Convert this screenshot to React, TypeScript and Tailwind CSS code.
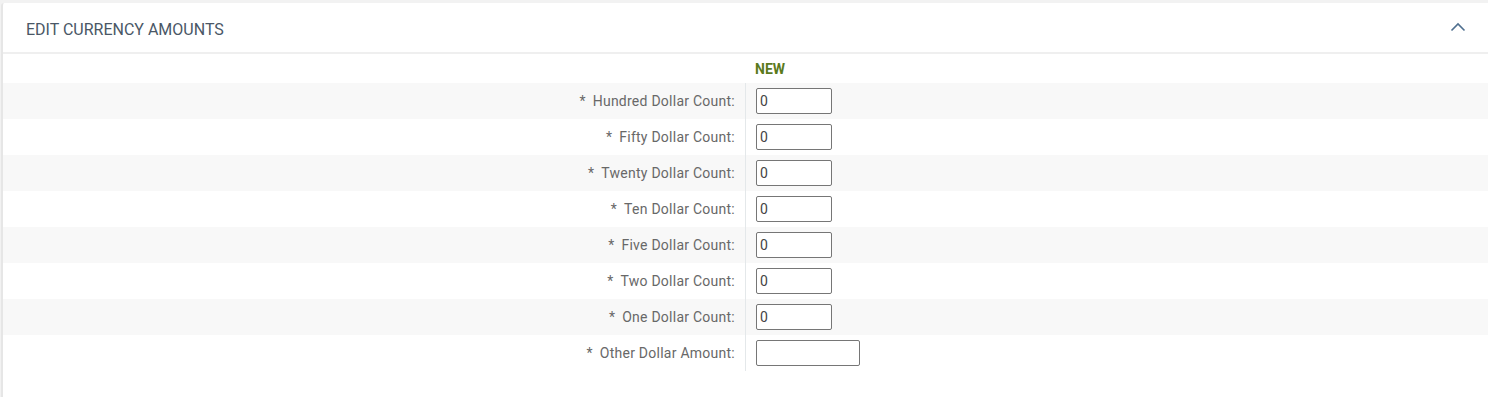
import React from 'react';

const rows = [
  { label: 'Hundred Dollar Count:', value: '0' },
  { label: 'Fifty Dollar Count:', value: '0' },
  { label: 'Twenty Dollar Count:', value: '0' },
  { label: 'Ten Dollar Count:', value: '0' },
  { label: 'Five Dollar Count:', value: '0' },
  { label: 'Two Dollar Count:', value: '0' },
  { label: 'One Dollar Count:', value: '0' },
  { label: 'Other Dollar Amount:', value: '', wide: true },
];

export default function App() {
  return (
    <div className="h-[397px] bg-[#f2f2f2] pt-[3px] pl-[1px] overflow-hidden" style={{ fontFamily: 'Roboto, "Liberation Sans", sans-serif' }}>
      <div className="h-full bg-white border-l-2 border-[#e6e6e6] rounded-tl-[3px]">
        {/* header */}
        <div className="h-[51px] flex items-center justify-between pl-[23px] pr-[22px] pt-[5px] border-b-2 border-[#efefef]">
          <h2 className="text-[16px] text-[#4a5766]">EDIT CURRENCY AMOUNTS</h2>
          <svg width="16" height="10" viewBox="0 0 16 10" className="mb-[6px]">
            <polyline points="1.5,8.5 8,2 14.5,8.5" fill="none" stroke="#4f6f8f" strokeWidth="1.6" />
          </svg>
        </div>

        {/* column heading */}
        <div className="flex h-[29px] items-center">
          <div className="w-[743px]" />
          <div className="pl-[9px] text-[14px] font-bold text-[#5b7a1c] pt-[1px]">NEW</div>
        </div>

        {rows.map((row, i) => (
          <div key={row.label} className={`flex h-[36px] ${i % 2 === 0 ? 'bg-[#f8f8f8]' : 'bg-white'}`}>
            <div className="w-[743px] flex items-center justify-end pr-[10px] border-r border-[#e4e8ea] text-[14px] tracking-[0.25px] text-[#686868]">
              <span className="mr-[7px]">*</span>
              <span>{row.label}</span>
            </div>
            <div className="flex items-center pl-[10px]">
              <input
                readOnly
                value={row.value}
                className={`${row.wide ? 'w-[104px]' : 'w-[76px]'} h-[26px] bg-white border border-[#767676] rounded-[2px] px-[3px] text-[14px] text-[#444444] outline-none`}
              />
            </div>
          </div>
        ))}
      </div>
    </div>
  );
}
